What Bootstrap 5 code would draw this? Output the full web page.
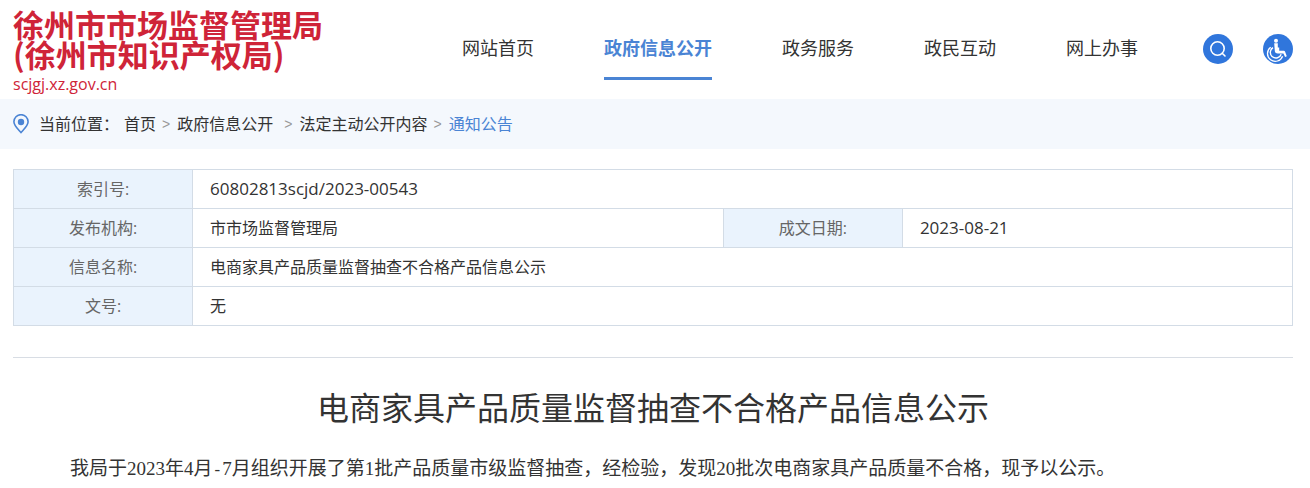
<!DOCTYPE html>
<html lang="zh-CN">
<head>
<meta charset="utf-8">
<meta name="viewport" content="width=device-width, initial-scale=1">
<title>电商家具产品质量监督抽查不合格产品信息公示</title>
<link href="https://cdn.jsdelivr.net/npm/bootstrap@5.3.0/dist/css/bootstrap.min.css" rel="stylesheet">
<style>
body { font-family: "Open Sans", "Noto Sans CJK SC", sans-serif; font-size: 16px; line-height: 24px; color: #333; background: #fff; }
.page-wrap { padding-left: 13px; padding-right: 17px; }
.site-head { min-height: 99px; padding-top: 9px; }
.brand-link { color: #cf2438; font-family: "Noto Sans CJK SC", sans-serif; }
.brand-name { font-size: 31px; line-height: 30px; font-weight: 700; }
.brand-url { font-family: "Open Sans", sans-serif; font-size: 16px; line-height: 30px; }
.main-menu { gap: 70px; }
.main-menu .nav-link { padding: 17px 0 15px; font-size: 18px; line-height: 28px; color: #333; border-bottom: 3px solid transparent; white-space: nowrap; }
.main-menu .nav-link.active { color: #4a84d4; font-weight: 700; border-color: #4a84d4; }
.tools { gap: 30px; margin-left: 65px; }
.tools .btn { width: 30px; height: 30px; }
.crumb-bar { background: #f4f8fd; min-height: 50px; }
.crumb-bar a { color: #333; }
.crumb-bar .breadcrumb-item + .breadcrumb-item { padding-left: 6px; }
.crumb-bar .breadcrumb-item + .breadcrumb-item::before { content: ">"; color: #999; font-family: "Liberation Sans", sans-serif; font-size: 14px; padding-right: 7px; }
.crumb-bar .breadcrumb-item.wide-gap { padding-left: 11px; }
.crumb-bar .here { color: #4a84d4; }
.crumb-label { margin-left: 10px; margin-right: 5px; }
.meta-table { table-layout: fixed; border-color: #d3dce6; margin-bottom: 31px; }
.meta-table th, .meta-table td { padding: 7px 17px; color: #333; vertical-align: middle; }
.meta-table th { background: #eaf3fd; color: #666; font-weight: 400; text-align: center; }
.col-key { width: 14%; }
.col-org { width: 41.5%; }
.latin { font-size: 17px; }
.article { border-top: 1px solid #d8dde4; padding-top: 26px; }
.article h1 { font-size: 32px; line-height: 48px; font-weight: 400; margin-bottom: 21px; color: #333; }
.article p { font-family: "Liberation Serif", "Noto Sans CJK SC", serif; font-size: 19px; line-height: 32px; text-indent: 3em; }
.half-dash { font-family: "Liberation Mono", monospace; font-size: 16px; }
</style>
</head>
<body>
<header class="site-head page-wrap d-flex align-items-start justify-content-between">
  <a class="brand-link text-decoration-none" href="#">
    <div class="brand-name">徐州市市场监督管理局<br>(徐州市知识产权局)</div>
    <div class="brand-url">scjgj.xz.gov.cn</div>
  </a>
  <div class="d-flex align-items-center mt-2">
    <nav aria-label="主导航">
      <ul class="nav main-menu flex-nowrap">
        <li class="nav-item"><a class="nav-link" href="#">网站首页</a></li>
        <li class="nav-item"><a class="nav-link active" aria-current="page" href="#">政府信息公开</a></li>
        <li class="nav-item"><a class="nav-link" href="#">政务服务</a></li>
        <li class="nav-item"><a class="nav-link" href="#">政民互动</a></li>
        <li class="nav-item"><a class="nav-link" href="#">网上办事</a></li>
      </ul>
    </nav>
    <div class="tools d-flex">
      <button type="button" class="btn p-0 border-0 rounded-circle d-flex" aria-label="搜索">
        <svg width="30" height="30" viewBox="0 0 30 30" fill="none"><circle cx="15" cy="15" r="15" fill="#3076dc"/><circle cx="14.500" cy="14.500" r="6.700" stroke="#fff" stroke-width="1.600"/><path d="M19.200 19.200l2.800 2.800" stroke="#fff" stroke-width="1.600" stroke-linecap="round"/></svg>
      </button>
      <button type="button" class="btn p-0 border-0 rounded-circle d-flex" aria-label="无障碍">
        <svg width="30" height="30" viewBox="0 0 30 30" fill="none"><circle cx="15" cy="15" r="15" fill="#3076dc"/><circle cx="13" cy="6.800" r="2" fill="#fff"/><path d="M11.200 9.200h3.600v4.300h1.400v3.300h4.600c.7 0 1 .3 1.200.8l1.800 4.600-1.700.8-1.700-3.400h-5.600c-1.800 0-3-1-3-2.800z" fill="#fff"/><path d="M10 13.600a5.600 5.600 0 1 0 8.200 6.600" stroke="#fff" stroke-width="1.400"/><path d="M7.700 13.200a7.800 7.800 0 1 0 11.900 9" stroke="#fff" stroke-width="1.300"/></svg>
      </button>
    </div>
  </div>
</header>

<div class="crumb-bar page-wrap d-flex align-items-center">
  <svg width="16" height="20" viewBox="0 0 16 20" fill="none" aria-hidden="true"><path d="M8 18.600C5.500 15.600.9 11.800.9 7.800a7.100 7.100 0 0 1 14.200 0c0 4-4.600 7.800-7.100 10.800z" stroke="#4a84d4" stroke-width="1.600"/><circle cx="8" cy="8" r="3.200" fill="#4a84d4"/></svg>
  <span class="crumb-label">当前位置：</span>
  <nav aria-label="当前位置">
    <ol class="breadcrumb mb-0">
      <li class="breadcrumb-item"><a class="text-decoration-none" href="#">首页</a></li>
      <li class="breadcrumb-item"><a class="text-decoration-none" href="#">政府信息公开</a></li>
      <li class="breadcrumb-item wide-gap"><a class="text-decoration-none" href="#">法定主动公开内容</a></li>
      <li class="breadcrumb-item"><a class="text-decoration-none here" aria-current="page" href="#">通知公告</a></li>
    </ol>
  </nav>
</div>

<main class="page-wrap pt-1">
  <table class="table table-bordered meta-table mt-3">
    <colgroup><col class="col-key"><col class="col-org"><col class="col-key"><col></colgroup>
    <tbody>
      <tr><th scope="row">索引号:</th><td colspan="3" class="latin">60802813scjd/2023-00543</td></tr>
      <tr><th scope="row">发布机构:</th><td>市市场监督管理局</td><th scope="row">成文日期:</th><td class="latin">2023-08-21</td></tr>
      <tr><th scope="row">信息名称:</th><td colspan="3">电商家具产品质量监督抽查不合格产品信息公示</td></tr>
      <tr><th scope="row">文号:</th><td colspan="3">无</td></tr>
    </tbody>
  </table>
  <article class="article">
    <h1 class="text-center">电商家具产品质量监督抽查不合格产品信息公示</h1>
    <p class="mb-0">我局于2023年4月<span class="half-dash">-</span>7月组织开展了第1批产品质量市级监督抽查，经检验，发现20批次电商家具产品质量不合格，现予以公示。</p>
  </article>
</main>
<script src="https://cdn.jsdelivr.net/npm/bootstrap@5.3.0/dist/js/bootstrap.bundle.min.js"></script>
</body>
</html>
